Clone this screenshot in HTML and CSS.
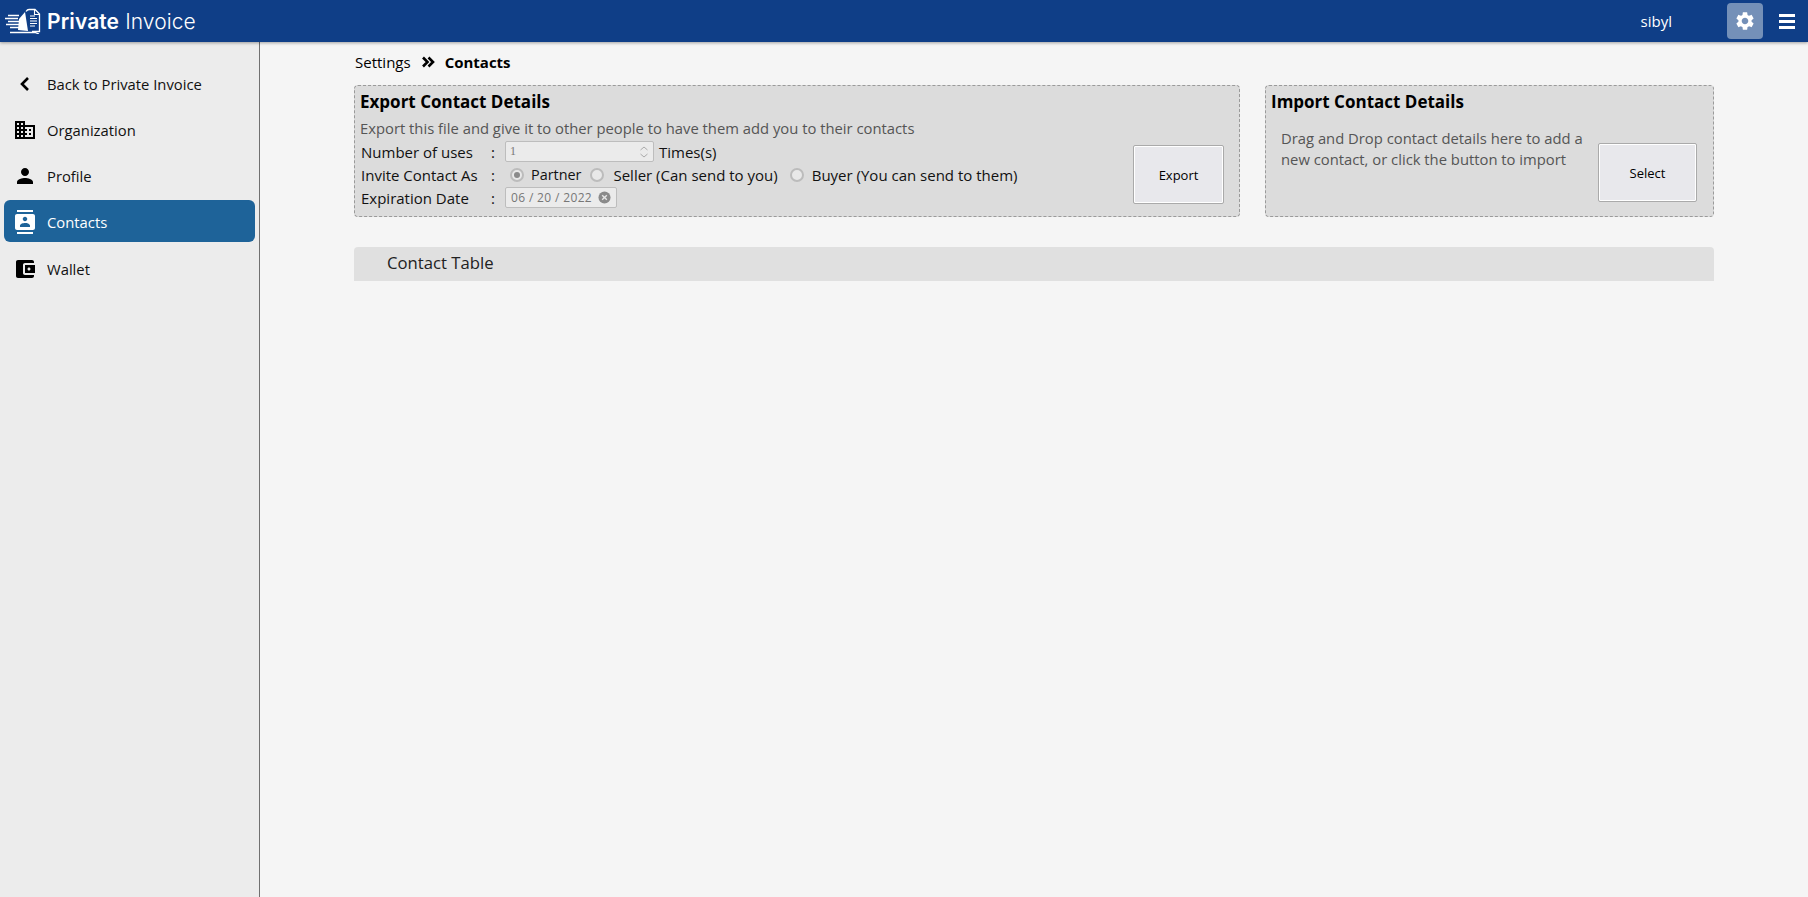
FILE: index.html
```html
<!DOCTYPE html>
<html lang="en">
<head>
<meta charset="utf-8">
<title>Private Invoice</title>
<link rel="stylesheet" href="styles.css">
</head>
<body>
<header class="topbar">
  <div class="brand">
    <svg class="logo" viewBox="0 0 36 26" width="36" height="26" fill="none" stroke="#fff">
      <path d="M21 3.500c1-1.500 2-2 3-2h6l4.500 4.500v17.500H27" stroke-width="1.300"/>
      <path d="M29.500 1.500v5h5" stroke-width="1.100"/>
      <path d="M25 8h5M25 10.500h7M25 13h7M25 15.500h7M25 18h5" stroke-width="1.200"/>
      <path d="M5 24.500h25l4 1.500" stroke-width="1.300"/>
      <path d="M3 7.500h11M0 10.500h13M3 13.500h11M1 16.500h13M5 19.500h10" stroke-width="1.500"/>
      <path d="M14 11l6-7 3 19-10-1z" fill="#fff" stroke="none"/>
    </svg>
    <span class="brand-name"><b>Private</b> Invoice</span>
  </div>
  <span class="user">sibyl</span>
  <button class="gear-btn" aria-label="Settings">
    <svg viewBox="0 0 24 24" width="22" height="22" fill="#fff"><path d="M19.14 12.94c.04-.3.06-.61.06-.94 0-.32-.02-.64-.07-.94l2.03-1.58c.18-.14.23-.41.12-.61l-1.92-3.32c-.12-.22-.37-.29-.59-.22l-2.39.96c-.5-.38-1.03-.7-1.62-.94l-.36-2.54c-.04-.24-.24-.41-.48-.41h-3.84c-.24 0-.43.17-.47.41l-.36 2.54c-.59.24-1.13.57-1.62.94l-2.39-.96c-.22-.08-.47 0-.59.22L2.74 8.87c-.12.21-.08.47.12.61l2.03 1.58c-.05.3-.09.63-.09.94s.02.64.07.94l-2.03 1.58c-.18.14-.23.41-.12.61l1.92 3.32c.12.22.37.29.59.22l2.39-.96c.5.38 1.03.7 1.62.94l.36 2.54c.05.24.24.41.48.41h3.84c.24 0 .44-.17.47-.41l.36-2.54c.59-.24 1.13-.56 1.62-.94l2.39.96c.22.08.47 0 .59-.22l1.92-3.32c.12-.22.07-.47-.12-.61l-2.01-1.58zM12 15.6c-1.98 0-3.6-1.62-3.6-3.6s1.62-3.6 3.6-3.6 3.6 1.62 3.6 3.6-1.62 3.6-3.6 3.6z"/></svg>
  </button>
  <button class="menu-btn" aria-label="Menu"><span></span><span></span><span></span></button>
</header>
<div class="shell">
  <nav class="sidebar">
    <a class="nav-item">
      <svg class="nav-icon" viewBox="0 0 24 24" width="24" height="24" fill="none" stroke="#000" stroke-width="2.6"><path d="M15 6l-6 6 6 6"/></svg>
      <span>Back to Private Invoice</span>
    </a>
    <a class="nav-item">
      <svg class="nav-icon" viewBox="0 0 24 24" width="24" height="24"><path d="M12 7V3H2v18h20V7H12zM6 19H4v-2h2v2zm0-4H4v-2h2v2zm0-4H4V9h2v2zm0-4H4V5h2v2zm4 12H8v-2h2v2zm0-4H8v-2h2v2zm0-4H8V9h2v2zm0-4H8V5h2v2zm10 12h-8v-2h2v-2h-2v-2h2v-2h-2V9h8v10zm-2-8h-2v2h2v-2zm0 4h-2v2h2v-2z"/></svg>
      <span>Organization</span>
    </a>
    <a class="nav-item">
      <svg class="nav-icon" viewBox="0 0 24 24" width="24" height="24"><path d="M12 12c2.21 0 4-1.79 4-4s-1.79-4-4-4-4 1.79-4 4 1.79 4 4 4zm0 2c-2.67 0-8 1.34-8 4v2h16v-2c0-2.66-5.33-4-8-4z"/></svg>
      <span>Profile</span>
    </a>
    <a class="nav-item active">
      <svg class="nav-icon" viewBox="0 0 24 24" width="24" height="24" fill="#fff"><path d="M20 0H4v2h16V0zM4 24h16v-2H4v2zM20 4H4c-1.1 0-2 .9-2 2v12c0 1.1.9 2 2 2h16c1.1 0 2-.9 2-2V6c0-1.1-.9-2-2-2zm-8 2.75c1.24 0 2.25 1.01 2.25 2.25s-1.01 2.25-2.25 2.25S9.75 10.24 9.75 9 10.76 6.75 12 6.75zM17 17H7v-1.5c0-1.67 3.33-2.5 5-2.5s5 .83 5 2.5V17z"/></svg>
      <span>Contacts</span>
    </a>
    <a class="nav-item after-active">
      <svg class="nav-icon" viewBox="0 0 24 24" width="24" height="24"><path d="M21 18v1c0 1.1-.9 2-2 2H5c-1.11 0-2-.9-2-2V5c0-1.1.89-2 2-2h14c1.1 0 2 .9 2 2v1h-9c-1.11 0-2 .9-2 2v8c0 1.1.89 2 2 2h9zm-9-2h10V8H12v8zm4-2.5c-.83 0-1.5-.67-1.5-1.5s.67-1.5 1.500-1.500 1.500.67 1.500 1.500-.67 1.500-1.500 1.500z"/></svg>
      <span>Wallet</span>
    </a>
  </nav>
  <main class="content">
    <div class="breadcrumb">
      <span>Settings</span>
      <svg viewBox="0 0 14 12" width="14" height="12" fill="none" stroke="#000" stroke-width="2.6"><path d="M2 1.500L6.500 6 2 10.500M7.500 1.500L12 6l-4.500 4.500"/></svg>
      <b>Contacts</b>
    </div>
    <div class="panels">
      <section class="panel export">
        <div class="panel-body">
          <h2>Export Contact Details</h2>
          <p class="hint">Export this file and give it to other people to have them add you to their contacts</p>
          <div class="form-row">
            <span class="label">Number of uses</span><span class="colon">:</span>
            <span class="field number"><span class="num-value">1</span>
              <svg viewBox="0 0 10 14" width="10" height="14" fill="none" stroke="#aaa" stroke-width="1"><path d="M1.500 5L5 2l3.500 3M1.500 9L5 12l3.500-3"/></svg>
            </span>
            <span>Times(s)</span>
          </div>
          <div class="form-row">
            <span class="label">Invite Contact As</span><span class="colon">:</span>
            <span class="radio checked"></span><span class="radio-text partner">Partner</span>
            <span class="radio"></span><span class="radio-text seller">Seller (Can send to you)</span>
            <span class="radio"></span><span class="radio-text buyer">Buyer (You can send to them)</span>
          </div>
          <div class="form-row">
            <span class="label">Expiration Date</span><span class="colon">:</span>
            <span class="field date"><span class="date-value">06 / 20 / 2022</span>
              <svg viewBox="0 0 14 14" width="13" height="13"><circle cx="7" cy="7" r="6.500" fill="#8a8a8a"/><path d="M4.500 4.500l5 5M9.500 4.500l-5 5" stroke="#e6e6e6" stroke-width="1.500"/></svg>
            </span>
          </div>
        </div>
        <button class="action export-btn">Export</button>
      </section>
      <section class="panel import">
        <div class="panel-body">
          <h2>Import Contact Details</h2>
          <p class="drop-text">Drag and Drop contact details here to add a new contact, or click the button to import</p>
        </div>
        <button class="action select-btn">Select</button>
      </section>
    </div>
    <div class="table-head">Contact Table</div>
  </main>
</div>
</body>
</html>
```
FILE: styles.css
```css
* { box-sizing: border-box; }
html, body { height: 100%; }
body {
  margin: 0;
  display: flex;
  flex-direction: column;
  height: 897px;
  overflow: hidden;
  background: #f5f5f5;
  color: #000;
  font-family: "Open Sans", "Noto Sans", sans-serif;
  font-size: 15px;
}
.topbar {
  height: 42px;
  flex: none;
  display: flex;
  align-items: center;
  background: #0f3e87;
  color: #fff;
  box-shadow: 0 1px 3px rgba(0,0,0,.35);
  position: relative;
  z-index: 1;
}
.brand { display: flex; align-items: center; margin-left: 5px; flex: 1; }
.brand-name {
  margin-left: 6px;
  font-family: "Inter", sans-serif;
  font-size: 21px;
  font-weight: 300;
  letter-spacing: .1px;
}
.brand-name b { font-weight: 600; }
.user { margin-right: 55px; font-size: 15px; }
.gear-btn {
  width: 36px;
  height: 36px;
  border: 0;
  padding: 0;
  border-radius: 4px;
  background: #7490b8;
  display: flex;
  align-items: center;
  justify-content: center;
}
.menu-btn {
  width: 16px;
  height: 15px;
  margin: 0 13px 0 16px;
  padding: 0;
  border: 0;
  background: none;
  display: flex;
  flex-direction: column;
  justify-content: space-between;
}
.menu-btn span { display: block; height: 3px; width: 16px; background: #fff; }
.shell { flex: 1; display: flex; min-height: 0; }
.sidebar {
  width: 260px;
  flex: none;
  background: #ececec;
  border-right: 1px solid #707070;
  padding: 21px 4px 0;
  display: flex;
  flex-direction: column;
  gap: 4px;
}
.nav-item {
  height: 42px;
  display: flex;
  align-items: center;
  padding-left: 9px;
  gap: 10px;
  border-radius: 6px;
  color: #111;
  font-size: 14.800px;
}
.nav-item.active {
  margin-top: -1px;
  padding-top: 2px;
  background: #1e6399;
  color: #fff;
}
.nav-item.after-active { margin-top: 2px; }
.nav-icon { flex: none; }
.content { flex: 1; padding: 11px 94px 0 94px; min-width: 0; }
.breadcrumb {
  height: 18px;
  display: flex;
  align-items: center;
  gap: 10px;
  padding-left: 1px;
  font-size: 15px;
}
.breadcrumb b { font-weight: 700; }
.panels { display: flex; gap: 25px; margin-top: 14px; }
.panel {
  height: 132px;
  background: #dcdcdc;
  border: 1px dashed #9a9a9a;
  border-radius: 4px;
  display: flex;
  position: relative;
}
.export { width: 886px; }
.import { flex: 1; }
.panel-body { flex: 1; padding: 4px 5px 0; min-width: 0; }
h2 { margin: 0; font-size: 17px; line-height: 24px; font-weight: 700; }
.hint { margin: 3px 0 0; height: 23px; line-height: 23px; color: #555; font-size: 14.800px; }
.form-row { height: 23px; display: flex; align-items: center; padding-left: 1px; font-size: 15px; color: #111; }
.label { width: 130px; }
.colon { width: 14px; }
.field {
  height: 21px;
  display: flex;
  align-items: center;
  justify-content: space-between;
  background: #ebebeb;
  border: 1px solid #bdbdbd;
  border-radius: 2px;
  color: #777;
  font-size: 12px;
  padding: 0 4px;
}
.num-value { font-family: "Liberation Serif", serif; }
.date-value { letter-spacing: .35px; }
.number { width: 149px; margin-right: 5px; }
.date { width: 112px; padding: 0 5px; }
.radio {
  width: 14px;
  height: 14px;
  border-radius: 50%;
  border: 2px solid #bcbcbc;
  background: #e8e8e8;
  margin: 0 7px 0 5px;
  flex: none;
  position: relative;
}
.radio.checked::after {
  content: "";
  position: absolute;
  left: 2px;
  top: 2px;
  width: 6px;
  height: 6px;
  border-radius: 50%;
  background: #8a8a8a;
}
.radio-text { margin-right: 4px; }
.radio-text.partner { font-size: 14.400px; }
.radio-text.seller { margin: 0 7px 0 2px; }
.radio-text.buyer { margin-left: 1px; }
.drop-text { margin: 14px 0 0 10px; width: 310px; line-height: 21px; color: #555; font-size: 14.800px; }
.action {
  position: absolute;
  width: 91px;
  height: 59px;
  background: #e8e8ec;
  border: 1px solid #aaa;
  border-radius: 2px;
  box-shadow: inset 0 0 0 1px #fff;
  font: 13px "Open Sans", sans-serif;
  color: #000;
  padding: 0;
}
.export-btn { right: 15px; top: 59px; }
.select-btn { right: 16px; top: 57px; width: 99px; }
.table-head {
  margin-top: 30px;
  height: 34px;
  line-height: 32px;
  background: #e0e0e0;
  border-radius: 4px 4px 0 0;
  padding-left: 33px;
  font-size: 16.700px;
  color: #222;
}
```
